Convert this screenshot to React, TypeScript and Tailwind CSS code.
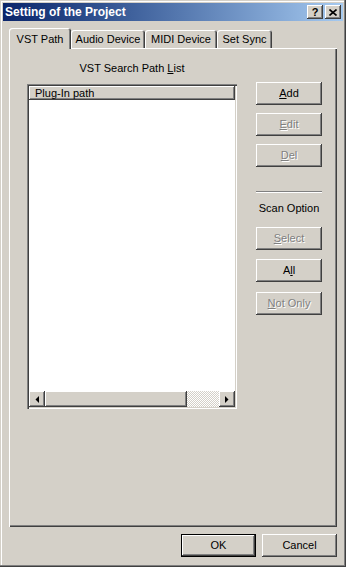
import type { ReactNode } from 'react';

const raised =
  'shadow-[inset_-1px_-1px_0_#404040,inset_1px_1px_0_#fff,inset_-2px_-2px_0_#808080]';

function Btn({ children, disabled, def, className = '' }: { children: ReactNode; disabled?: boolean; def?: boolean; className?: string }) {
  return (
    <div
      className={
        'flex h-[23px] items-center justify-center bg-[#d4d0c8] leading-none ' +
        (def
          ? 'shadow-[inset_0_0_0_1px_#000,inset_-2px_-2px_0_#404040,inset_2px_2px_0_#fff,inset_-3px_-3px_0_#808080] '
          : raised + ' ') +
        (disabled ? 'text-[#808080] [text-shadow:1px_1px_0_#fff] ' : 'text-black ') +
        className
      }
    >
      <span className="pb-px">{children}</span>
    </div>
  );
}

function Tab({ label, selected, w }: { label: string; selected?: boolean; w: string }) {
  return (
    <div
      className={
        'relative flex items-center justify-center rounded-t-[3px] bg-[#d4d0c8] shadow-[inset_1px_1px_0_#fff,inset_-1px_0_0_#404040,inset_-2px_0_0_#808080] ' +
        w +
        (selected ? ' z-10 -mb-[1px] h-[21px] pt-px' : ' h-[18px] pt-px')
      }
    >
      {label}
    </div>
  );
}

function Arrow({ dir }: { dir: 'l' | 'r' }) {
  return (
    <div className={'flex h-[16px] w-[16px] items-center justify-center bg-[#d4d0c8] ' + raised}>
      <svg width="4" height="7" viewBox="0 0 4 7">
        <polygon points={dir === 'l' ? '4,0 4,7 0.5,3.5' : '0,0 0,7 3.5,3.5'} fill="#000" />
      </svg>
    </div>
  );
}

export default function App() {
  return (
    <div className="flex h-[567px] w-[346px] flex-col bg-[#d4d0c8] p-[3px] text-[11px] text-black [font-family:'Liberation_Sans',Arial,sans-serif] shadow-[inset_-1px_-1px_0_#404040,inset_-2px_-2px_0_#808080,inset_1px_1px_0_#d4d0c8,inset_2px_2px_0_#fff]">
      {/* title bar */}
      <div className="flex h-[18px] items-center justify-between bg-gradient-to-r from-[#0a246a] to-[#a6caf0] pl-[2px] pr-[2px]">
        <span className="text-[12px] font-bold text-white">Setting of the Project</span>
        <div className="flex gap-[2px]">
          <div className={'flex h-[14px] w-[16px] items-center justify-center bg-[#d4d0c8] text-[11px] font-bold leading-none ' + raised}>
            ?
          </div>
          <div className={'flex h-[14px] w-[16px] items-center justify-center bg-[#d4d0c8] ' + raised}>
            <svg width="8" height="7" viewBox="0 0 8 7">
              <path d="M0.5 0.5 L7.5 6.5 M7.5 0.5 L0.5 6.5" stroke="#000" strokeWidth="1.6" />
            </svg>
          </div>
        </div>
      </div>

      <div className="flex flex-col px-[6px] pt-[7px]">
        {/* tabs */}
        <div className="flex h-[20px] items-end">
          <Tab label="VST Path" selected w="w-[62px]" />
          <Tab label="Audio Device" w="w-[74px]" />
          <Tab label="MIDI Device" w="w-[72px]" />
          <Tab label="Set Sync" w="w-[55px]" />
        </div>

        {/* panel */}
        <div className="flex h-[479px] w-[328px] pl-[18px] pt-[14px] shadow-[inset_1px_1px_0_#fff,inset_-1px_-1px_0_#404040,inset_-2px_-2px_0_#808080]">
          <div className="flex w-[210px] flex-col">
            <div className="h-[13px] text-center leading-[13px]">
              VST Search Path <u className="underline-offset-[1px]">L</u>ist
            </div>
            <div className="mt-[9px] flex h-[325px] flex-col bg-white p-[2px] shadow-[inset_1px_1px_0_#808080,inset_2px_2px_0_#404040,inset_-1px_-1px_0_#fff,inset_-2px_-2px_0_#d4d0c8]">
              <div className={'flex h-[14px] items-center bg-[#d4d0c8] pl-[6px] text-[11px] leading-none ' + raised}>
                Plug-In path
              </div>
              <div className="flex-1" />
              <div className="flex h-[16px]">
                <Arrow dir="l" />
                <div className={'h-[16px] w-[142px] bg-[#d4d0c8] ' + raised} />
                <div className="h-[16px] flex-1 bg-[repeating-conic-gradient(#d4d0c8_0_25%,#fff_0_50%)] bg-[length:2px_2px]" />
                <Arrow dir="r" />
              </div>
            </div>
          </div>

          <div className="ml-[19px] mt-[20px] flex w-[66px] flex-col">
            <Btn>
              <u>A</u>dd
            </Btn>
            <Btn disabled className="mt-[8px]">
              <u>E</u>dit
            </Btn>
            <Btn disabled className="mt-[8px]">
              <u>D</u>el
            </Btn>
            <div className="mt-[24px] h-[2px] border-t border-[#808080] border-b border-b-white" />
            <div className="mt-[9px] h-[13px] text-center leading-[13px]">Scan Option</div>
            <Btn disabled className="mt-[12px]">
              <u>S</u>elect
            </Btn>
            <Btn className="mt-[9px]">
              A<u>l</u>l
            </Btn>
            <Btn disabled className="mt-[10px]">
              <u>N</u>ot Only
            </Btn>
          </div>
        </div>

        {/* bottom buttons */}
        <div className="mt-[7px] flex justify-end gap-[6px]">
          <Btn def className="w-[75px]">
            OK
          </Btn>
          <Btn className="w-[75px]">Cancel</Btn>
        </div>
      </div>
    </div>
  );
}
